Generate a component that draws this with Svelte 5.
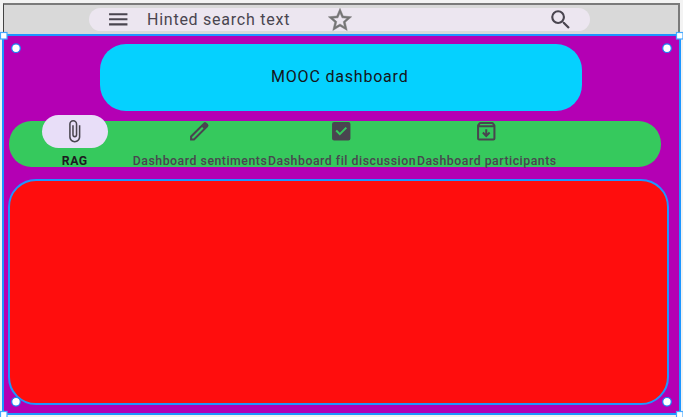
<script>
  const tabs = [
    { label: 'RAG', icon: 'clip', width: 67, spacing: 0.5, active: true },
    { label: 'Dashboard sentiments', icon: 'edit', width: 135.5, spacing: 0.52 },
    { label: 'Dashboard fil discussion', icon: 'check', width: 148.5, spacing: 0.52 },
    { label: 'Dashboard participants', icon: 'archive', width: 141, spacing: 0.52 }
  ];
  const paths = {
    clip: 'M16.5 6v11.5c0 2.21-1.79 4-4 4s-4-1.79-4-4V5a2.5 2.5 0 0 1 5 0v10.5c0 .55-.45 1-1 1s-1-.45-1-1V6H10v9.5a2.5 2.5 0 0 0 5 0V5c0-2.21-1.79-4-4-4S7 2.79 7 5v12.5c0 3.04 2.46 5.5 5.5 5.5s5.5-2.46 5.5-5.5V6h-1.5z',
    edit: 'M5 19h1.425L16.2 9.225 14.775 7.8 5 17.575V19zm-2 2v-4.25L16.2 3.575a2 2 0 0 1 2.8 0L20.425 5a2 2 0 0 1 0 2.8L7.25 21H3z',
    check: 'M19 3H5a2 2 0 0 0-2 2v14a2 2 0 0 0 2 2h14a2 2 0 0 0 2-2V5a2 2 0 0 0-2-2zm-8.4 13.2L6.35 11.95l1.4-1.4 2.85 2.85 5.65-5.65 1.4 1.4z',
    archive: 'M12 18l4-4-1.4-1.4-1.6 1.6V10h-2v4.2l-1.6-1.6L8 14l4 4zM5 8v11h14V8H5zm0 13a2 2 0 0 1-2-2V6.525c0-.5.15-.9.425-1.25l1.25-1.525C5.1 3.25 5.55 3 6.25 3h11.5c.7 0 1.15.25 1.575.75l1.25 1.525c.275.35.425.75.425 1.25V19a2 2 0 0 1-2 2H5zM5.4 6h13.2l-.85-1H6.25L5.4 6z'
  };
  const squares = [[3.5, 35.5], [679.5, 35.5], [3.5, 414.5], [679.5, 414.5]];
  const dots = [[16, 48.2], [667, 48.2], [16, 401.8], [667, 401.8]];
</script>

<main>
  <header>
    <div class="search">
      <svg class="menu" viewBox="0 0 24 24"><path d="M3 6h18v2H3zm0 5h18v2H3zm0 5h18v2H3z" /></svg>
      <span class="hint">Hinted search text</span>
      <svg class="star" viewBox="0 0 24 24"><path d="M22 9.24l-7.19-.62L12 2 9.19 8.63 2 9.24l5.46 4.73L5.82 21 12 17.27 18.18 21l-1.63-7.03L22 9.24zM12 15.4l-3.76 2.27 1-4.28-3.32-2.88 4.38-.38L12 6.1l1.71 4.04 4.38.38-3.32 2.88 1 4.28L12 15.4z" /></svg>
      <svg class="find" viewBox="0 0 24 24"><path d="M15.5 14h-.79l-.28-.27A6.47 6.47 0 0 0 16 9.5 6.5 6.5 0 1 0 9.5 16c1.61 0 3.09-.59 4.23-1.57l.27.28v.79l5 4.99L20.49 19l-4.99-5zm-6 0a4.5 4.5 0 1 1 0-9 4.5 4.5 0 0 1 0 9z" /></svg>
    </div>
  </header>
  <section class="board">
    <h1>MOOC dashboard</h1>
    <nav>
      {#each tabs as tab}
        <div class="tab" class:active={tab.active} style="width:{tab.width}px">
          <span class="pill"><svg viewBox="0 0 24 24"><path d={paths[tab.icon]} /></svg></span>
          <span class="label" style="letter-spacing:{tab.spacing}px">{tab.label}</span>
        </div>
      {/each}
    </nav>
    <div class="content"></div>
  </section>
  <svg class="selection" viewBox="0 0 683 417">
    {#each squares as [x, y]}
      <rect x={x - 3} y={y - 3} width="6.5" height="6.5" />
    {/each}
    {#each dots as [x, y]}
      <circle cx={x} cy={y} r="4.3" />
    {/each}
  </svg>
</main>

<style>
  :global(body) { margin: 0; background: #f3f3f3; }
  main {
    position: relative;
    width: 683px;
    height: 417px;
    padding: 3px 2px 0;
    box-sizing: border-box;
    overflow: hidden;
    background: #f3f3f3;
    font-family: Roboto, sans-serif;
  }
  svg { display: block; flex: none; fill: #49454f; }
  header {
    height: 31px;
    box-sizing: border-box;
    margin: 0 1px 0 1px;
    padding: 3px 0 0 85px;
    border: 1px solid #444;
    border-top: 2px solid #7a7a7a;
    border-right: 2px solid #7a7a7a;
    border-bottom: 0;
    background: #d9d9d9;
  }
  .search {
    display: flex;
    align-items: center;
    width: 501px;
    height: 23px;
    border-radius: 12px;
    background: #ece6f0;
    box-sizing: border-box;
    padding-left: 16.5px;
  }
  .menu { width: 24.5px; height: 24.5px; }
  .hint {
    width: 179px;
    margin-left: 17px;
    color: #49454f;
    font-size: 16px;
    line-height: 22px;
    letter-spacing: 0.75px;
    white-space: nowrap;
  }
  .star {
    width: 28px;
    height: 28px;
    margin-top: 1px;
    fill: #757575;
    stroke: #757575;
    stroke-width: 0.4;
  }
  .find { width: 25.5px; height: 25.5px; margin-left: 193.5px; }
  .board {
    height: 381px;
    width: 679px;
    box-sizing: border-box;
    padding: 7.5px 0 0 4.5px;
    border: 2px solid #1e96ff;
    background: #b400b4;
  }
  h1 {
    width: 481.5px;
    height: 67px;
    margin: 0 0 0 91.8px;
    padding-right: 2.5px;
    box-sizing: border-box;
    border-radius: 26px;
    background: #05d1ff;
    color: #151519;
    font-size: 16px;
    font-weight: 400;
    line-height: 66px;
    letter-spacing: 0.8px;
    text-align: center;
  }
  nav {
    display: flex;
    width: 652.5px;
    height: 45.5px;
    margin-top: 10.8px;
    padding-left: 32.8px;
    box-sizing: border-box;
    border-radius: 22.5px;
    background: #36c95d;
  }
  .tab {
    display: flex;
    flex: none;
    flex-direction: column;
    align-items: center;
    height: 55px;
    margin-top: -6.3px;
  }
  .active { margin-right: 24px; }
  .pill {
    display: flex;
    flex: none;
    align-items: center;
    justify-content: center;
    width: 66.5px;
    height: 33px;
    border-radius: 16.5px;
  }
  .active .pill { background: #e8def8; }
  .pill svg { width: 24.5px; height: 24.5px; margin-right: 1px; }
  .label {
    margin-top: 5px;
    color: #49454f;
    font-size: 12.3px;
    font-weight: 500;
    line-height: 17px;
    white-space: nowrap;
  }
  .active .label { color: #1d1b20; font-weight: 700; }
  .content {
    width: 661px;
    height: 226px;
    margin-top: 12.2px;
    margin-left: -0.5px;
    box-sizing: border-box;
    border: 2px solid #1e96ff;
    border-radius: 28px;
    background: #ff0d0d;
  }
  .selection {
    position: absolute;
    inset: 0;
    width: 683px;
    height: 417px;
    fill: #fff;
  }
  .selection rect { stroke: #45a9ff; stroke-width: 1.2; }
  .selection circle { stroke: #1687f5; stroke-width: 1.2; }
</style>
